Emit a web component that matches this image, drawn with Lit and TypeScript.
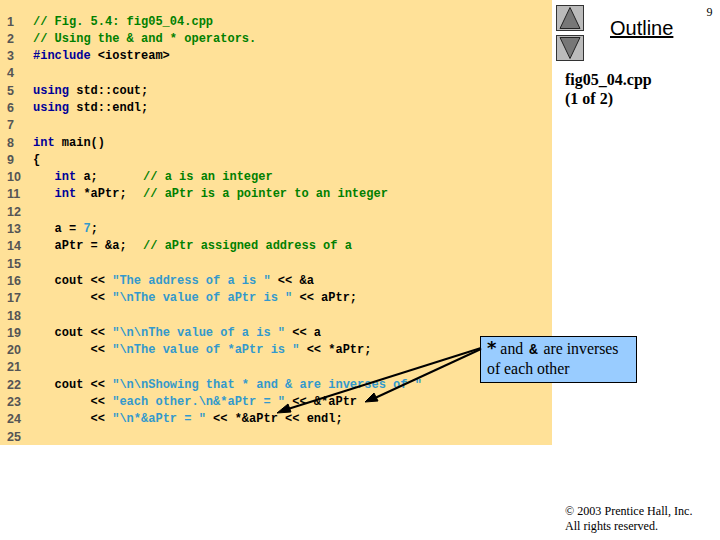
import { LitElement, html, css } from "lit";
import { customElement } from "lit/decorators.js";

type Seg = [string, string];
const k = (t: string): Seg => ["k", t];
const c = (t: string): Seg => ["c", t];
const m = (t: string): Seg => ["c m", t];
const s = (t: string): Seg => ["s", t];
const n = (t: string): Seg => ["n", t];
const LINES: Seg[][] = [
  [c("// Fig. 5.4: fig05_04.cpp")],
  [c("// Using the & and * operators.")],
  [k("#include"), n(" <iostream>")],
  [],
  [k("using"), n(" std::cout;")],
  [k("using"), n(" std::endl;")],
  [],
  [k("int"), n(" main()")],
  [n("{")],
  [n("   "), k("int"), n(" a;      "), m("// a is an integer")],
  [n("   "), k("int"), n(" *aPtr;  "), m("// aPtr is a pointer to an integer")],
  [],
  [n("   a = "), s("7"), n(";")],
  [n("   aPtr = &a;  "), m("// aPtr assigned address of a")],
  [],
  [n("   cout << "), s('"The address of a is "'), n(" << &a")],
  [n("        << "), s('"\\nThe value of aPtr is "'), n(" << aPtr;")],
  [],
  [n("   cout << "), s('"\\n\\nThe value of a is "'), n(" << a")],
  [n("        << "), s('"\\nThe value of *aPtr is "'), n(" << *aPtr;")],
  [],
  [n("   cout << "), s('"\\n\\nShowing that * and & are inverses of "')],
  [n("        << "), s('"each other.\\n&*aPtr = "'), n(" << &*aPtr")],
  [n("        << "), s('"\\n*&aPtr = "'), n(" << *&aPtr << endl;")],
  [],
];

@customElement("app-root")
export class AppRoot extends LitElement {
  static styles = css`
    :host { display: block; position: relative; width: 720px; height: 540px; background: #fff; overflow: hidden; }
    .page { display: flex; align-items: flex-start; height: 540px; }
    .panel { width: 552px; height: 445px; background: #ffe198; box-sizing: border-box; padding-top: 13.5px; flex: none; }
    .line { display: flex; height: 17.3px; line-height: 17.3px; }
    .num { width: 33px; padding-left: 7px; box-sizing: border-box; flex: none; font: bold 12.5px/17.3px "Liberation Sans", sans-serif; color: #555; }
    .code { white-space: pre; font: bold 12px/17.3px "Liberation Mono", monospace; color: #000; }
    .k { color: #000099; }
    .c { color: #008000; }
    .m { margin-left: 2px; }
    .s { color: #3399cc; }
    .side { flex: 1; display: flex; flex-direction: column; height: 540px; box-sizing: border-box; padding: 5px 0 6px 4px; }
    .top { display: flex; align-items: flex-start; }
    .nav { display: flex; flex-direction: column; gap: 4px; width: 29px; flex: none; }
    .btn { display: block; width: 28px; height: 26px; }
    .outline { margin: 11px 0 0 25px; font: 20px/24px "Liberation Sans", sans-serif; text-decoration: underline; color: #000; }
    .pg { margin-left: 33px; font: 12px/14px "Liberation Serif", serif; color: #000; }
    .file { margin: 9px 0 0 9px; font: bold 16px/19px "Liberation Serif", serif; color: #000; }
    .copy { margin: auto 0 0 9px; font: 12.1px/15px "Liberation Serif", serif; color: #000; }
    .callout { position: absolute; left: 480px; top: 336px; width: 157px; height: 47px; box-sizing: border-box; background: #99ccff; border: 1px solid #000; padding: 2px 6px; font: 15.8px/20px "Liberation Serif", serif; color: #000; }
    .star { font: bold 18px/0 "DejaVu Sans", sans-serif; }
    .amp { font: bold 14px/0 "Liberation Mono", monospace; margin: 0 2px; }
    .arrows { position: absolute; left: 0; top: 0; width: 720px; height: 540px; pointer-events: none; }
  `;

  render() {
    return html`
      <div class="page">
        <div class="panel">
          ${LINES.map((l, i) => html`<div class="line"><span class="num">${i + 1}</span><span class="code">${l.map(([x, t]) => html`<span class=${x}>${t}</span>`)}</span></div>`)}
        </div>
        <div class="side">
          <div class="top">
            <div class="nav">
              <svg class="btn" viewBox="0 0 28 26"><rect x=".5" y=".5" width="27" height="25" fill="#bbbbbb" stroke="#333"/><path d="M14 2.500 L24 23.500 H4Z" fill="#777" stroke="#222"/></svg>
              <svg class="btn" viewBox="0 0 28 26"><rect x=".5" y=".5" width="27" height="25" fill="#bbbbbb" stroke="#333"/><path d="M14 23.500 L24 2.500 H4Z" fill="#777" stroke="#222"/></svg>
            </div>
            <span class="outline">Outline</span>
            <span class="pg">9</span>
          </div>
          <div class="file">fig05_04.cpp<br />(1 of 2)</div>
          <div class="copy">© 2003 Prentice Hall, Inc.<br />All rights reserved.</div>
        </div>
      </div>
      <div class="callout"><span class="star">*</span> and <span class="amp">&amp;</span> are inverses<br />of each other</div>
      <svg class="arrows" viewBox="0 0 720 540">
        <g stroke="#000" stroke-width="2" fill="#000">
          <line x1="481" y1="348" x2="288" y2="409"/>
          <path d="M277 413 L288 404 L291 412Z" stroke-width="1"/>
          <line x1="481" y1="349" x2="375" y2="398"/>
          <path d="M365 402 L374 393 L378 401Z" stroke-width="1"/>
        </g>
      </svg>
    `;
  }
}
